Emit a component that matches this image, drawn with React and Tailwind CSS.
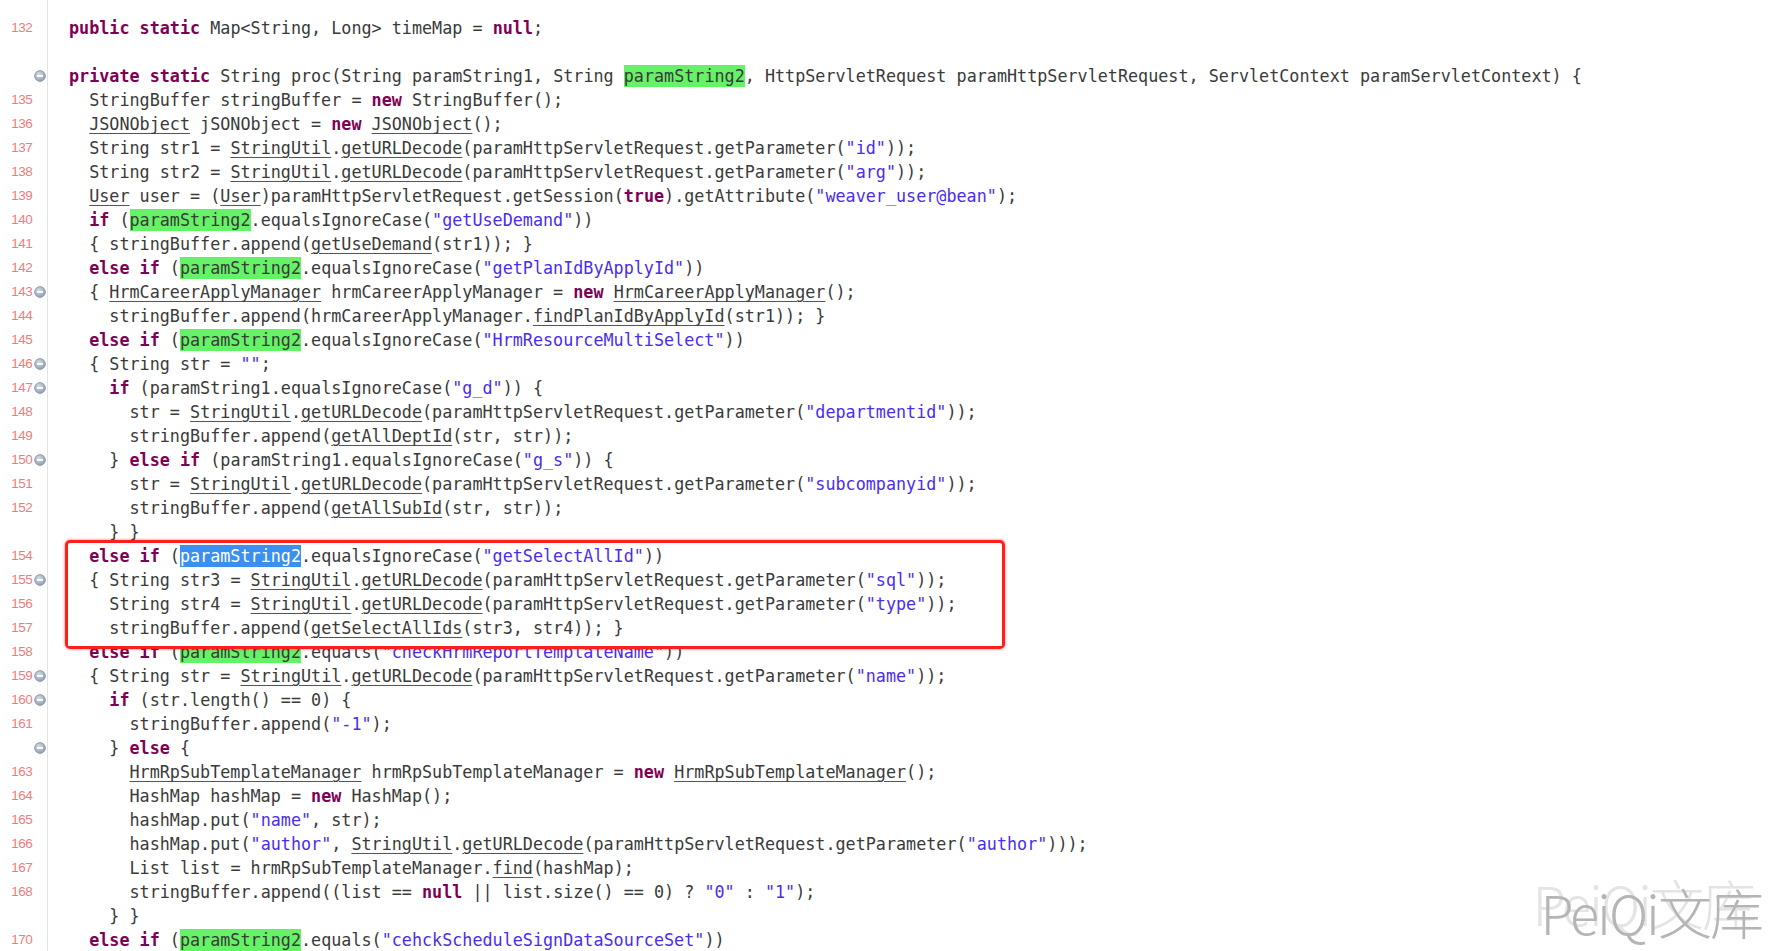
import React from "react";

const KEYWORDS = new Set(["public", "private", "static", "new", "if", "else", "null", "true"]);
const UNDER = new Set([
  "JSONObject", "StringUtil", "getURLDecode", "User", "getUseDemand", "HrmCareerApplyManager",
  "findPlanIdByApplyId", "getAllDeptId", "getAllSubId", "getSelectAllIds", "HrmRpSubTemplateManager", "find",
]);

const LINES = [
  { n: "132", i: 0, t: "public static Map<String, Long> timeMap = null;" },
  { n: "", i: 0, t: "" },
  { n: "", f: true, i: 0, t: "private static String proc(String paramString1, String paramString2, HttpServletRequest paramHttpServletRequest, ServletContext paramServletContext) {" },
  { n: "135", i: 2, t: "StringBuffer stringBuffer = new StringBuffer();" },
  { n: "136", i: 2, t: "JSONObject jSONObject = new JSONObject();" },
  { n: "137", i: 2, t: 'String str1 = StringUtil.getURLDecode(paramHttpServletRequest.getParameter("id"));' },
  { n: "138", i: 2, t: 'String str2 = StringUtil.getURLDecode(paramHttpServletRequest.getParameter("arg"));' },
  { n: "139", i: 2, t: 'User user = (User)paramHttpServletRequest.getSession(true).getAttribute("weaver_user@bean");' },
  { n: "140", i: 2, t: 'if (paramString2.equalsIgnoreCase("getUseDemand"))' },
  { n: "141", i: 2, t: "{ stringBuffer.append(getUseDemand(str1)); }" },
  { n: "142", i: 2, t: 'else if (paramString2.equalsIgnoreCase("getPlanIdByApplyId"))' },
  { n: "143", f: true, i: 2, t: "{ HrmCareerApplyManager hrmCareerApplyManager = new HrmCareerApplyManager();" },
  { n: "144", i: 4, t: "stringBuffer.append(hrmCareerApplyManager.findPlanIdByApplyId(str1)); }" },
  { n: "145", i: 2, t: 'else if (paramString2.equalsIgnoreCase("HrmResourceMultiSelect"))' },
  { n: "146", f: true, i: 2, t: '{ String str = "";' },
  { n: "147", f: true, i: 4, t: 'if (paramString1.equalsIgnoreCase("g_d")) {' },
  { n: "148", i: 6, t: 'str = StringUtil.getURLDecode(paramHttpServletRequest.getParameter("departmentid"));' },
  { n: "149", i: 6, t: "stringBuffer.append(getAllDeptId(str, str));" },
  { n: "150", f: true, i: 4, t: '} else if (paramString1.equalsIgnoreCase("g_s")) {' },
  { n: "151", i: 6, t: 'str = StringUtil.getURLDecode(paramHttpServletRequest.getParameter("subcompanyid"));' },
  { n: "152", i: 6, t: "stringBuffer.append(getAllSubId(str, str));" },
  { n: "", i: 4, t: "} }" },
  { n: "154", i: 2, sel: true, t: 'else if (paramString2.equalsIgnoreCase("getSelectAllId"))' },
  { n: "155", f: true, i: 2, t: '{ String str3 = StringUtil.getURLDecode(paramHttpServletRequest.getParameter("sql"));' },
  { n: "156", i: 4, t: 'String str4 = StringUtil.getURLDecode(paramHttpServletRequest.getParameter("type"));' },
  { n: "157", i: 4, t: "stringBuffer.append(getSelectAllIds(str3, str4)); }" },
  { n: "158", i: 2, t: 'else if (paramString2.equals("checkHrmReportTemplateName"))' },
  { n: "159", f: true, i: 2, t: '{ String str = StringUtil.getURLDecode(paramHttpServletRequest.getParameter("name"));' },
  { n: "160", f: true, i: 4, t: "if (str.length() == 0) {" },
  { n: "161", i: 6, t: 'stringBuffer.append("-1");' },
  { n: "", f: true, i: 4, t: "} else {" },
  { n: "163", i: 6, t: "HrmRpSubTemplateManager hrmRpSubTemplateManager = new HrmRpSubTemplateManager();" },
  { n: "164", i: 6, t: "HashMap hashMap = new HashMap();" },
  { n: "165", i: 6, t: 'hashMap.put("name", str);' },
  { n: "166", i: 6, t: 'hashMap.put("author", StringUtil.getURLDecode(paramHttpServletRequest.getParameter("author")));' },
  { n: "167", i: 6, t: "List list = hrmRpSubTemplateManager.find(hashMap);" },
  { n: "168", i: 6, t: 'stringBuffer.append((list == null || list.size() == 0) ? "0" : "1");' },
  { n: "", i: 4, t: "} }" },
  { n: "170", i: 2, t: 'else if (paramString2.equals("cehckScheduleSignDataSourceSet"))' },
];

function tokens(text, sel) {
  const out = [];
  const re = /("[^"]*")|([A-Za-z_][A-Za-z0-9_]*)|([^A-Za-z_"]+)/g;
  let m;
  let k = 0;
  while ((m = re.exec(text))) {
    k++;
    if (m[1]) {
      out.push(<span key={k} className="text-[#4b2cf0]">{m[1]}</span>);
    } else if (m[2]) {
      const w = m[2];
      if (KEYWORDS.has(w)) {
        out.push(<span key={k} className="font-bold text-[#7f0055]">{w}</span>);
      } else if (UNDER.has(w)) {
        out.push(<span key={k} className="underline decoration-[#555] underline-offset-[3px]">{w}</span>);
      } else if (w === "paramString2") {
        out.push(
          <span key={k} className={sel ? "bg-[#3a8ff0] text-white inline-block h-[22px] leading-[22px]" : "bg-[#66f266] inline-block h-[22px] leading-[22px]"}>{w}</span>
        );
      } else {
        out.push(<span key={k}>{w}</span>);
      }
    } else {
      out.push(<span key={k}>{m[3]}</span>);
    }
  }
  return out;
}

function Fold() {
  return (
    <svg width="12" height="12" viewBox="0 0 12 12">
      <defs>
        <radialGradient id="fg" cx="40%" cy="35%" r="70%">
          <stop offset="0%" stopColor="#d5dce5" />
          <stop offset="100%" stopColor="#8d9aab" />
        </radialGradient>
      </defs>
      <circle cx="6" cy="6" r="5.4" fill="url(#fg)" stroke="#8593a5" strokeWidth="0.8" />
      <line x1="3" y1="6" x2="9" y2="6" stroke="#ffffff" strokeWidth="1.7" />
    </svg>
  );
}

export default function App() {
  return (
    <div className="relative w-full h-[951px] overflow-hidden bg-white">
      <div className="flex h-full">
        <div className="w-[48px] shrink-0 border-r border-[#e3e3e3] pt-[16px]">
          {LINES.map((l, idx) => (
            <div key={idx} className="h-[24px] flex items-center">
              <span
                className="w-[33px] text-right text-[13.5px] text-[#f07c7c] tracking-[-0.5px]"
                style={{ fontFamily: '"Liberation Sans", Arial, sans-serif' }}
              >
                {l.n}
              </span>
              <span className="w-[15px] flex justify-center">{l.f ? <Fold /> : null}</span>
            </div>
          ))}
        </div>
        <div
          className="flex-1 pt-[16px] pl-[21px] text-[16.75px] text-[#3a3a3a] whitespace-pre"
          style={{ fontFamily: '"DejaVu Sans Mono", "Liberation Mono", monospace' }}
        >
          {LINES.map((l, idx) => (
            <div key={idx} className="h-[24px] leading-[24px]">
              {" ".repeat(l.i)}
              {tokens(l.t, l.sel)}
            </div>
          ))}
        </div>
      </div>

      <div className="absolute left-[65px] top-[540px] w-[940px] h-[109px] border-[3px] border-[#ff1f1f] rounded-[5px] shadow-[0_0_3px_rgba(255,0,0,0.6)]">
        <div className="absolute left-0 right-0 bottom-0 h-[5px] bg-white" />
      </div>

      <div
        className="absolute right-[26px] bottom-[12px] text-[54px] leading-none font-light tracking-[-2px]"
        style={{ fontFamily: '"Noto Sans CJK SC", "Noto Sans", sans-serif' }}
      >
        <span className="absolute left-[-8px] top-[-9px] text-[#e4e4e4]" aria-hidden="true">PeiQi文库</span>
        <span className="relative text-[#b5b5b5]">PeiQi文库</span>
      </div>
    </div>
  );
}
